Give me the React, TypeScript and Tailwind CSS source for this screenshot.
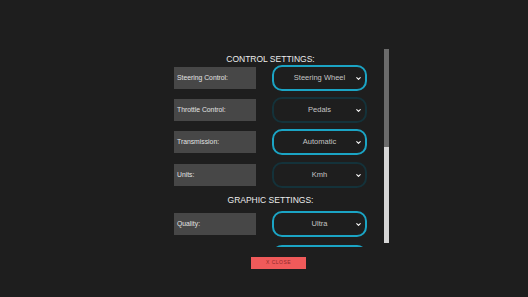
import { ChevronDown } from "lucide-react";

interface Setting {
  label: string;
  value: string;
  active: boolean;
}

const controlSettings: Setting[] = [
  { label: "Steering Control:", value: "Steering Wheel", active: true },
  { label: "Throttle Control:", value: "Pedals", active: false },
  { label: "Transmission:", value: "Automatic", active: true },
  { label: "Units:", value: "Kmh", active: false },
];

const graphicSettings: Setting[] = [
  { label: "Quality:", value: "Ultra", active: true },
  // next row is scrolled below the fold, only its border peeks in
  { label: "", value: "", active: true },
];

function Row({ setting }: { setting: Setting }) {
  return (
    <div className="flex h-[26px] shrink-0 items-center justify-between">
      <div className="flex h-[22px] w-[82px] items-center bg-[#474747] pl-[3px] text-[6.8px] text-[#e2e2e2]">
        {setting.label}
      </div>
      <div
        className={`relative flex h-[26px] w-[95px] items-center justify-center rounded-[10px] border-2 bg-[#1e1e1e] ${
          setting.active ? "border-[#1ba4c4]" : "border-[#14323a]"
        }`}
      >
        <span className="text-[7.5px] text-[#c4c4c4]">{setting.value}</span>
        <ChevronDown
          className="absolute right-[3px] h-[7px] w-[7px] text-white"
          strokeWidth={3.5}
        />
      </div>
    </div>
  );
}

function Heading({ children }: { children: string }) {
  return (
    <div className="flex h-[12px] shrink-0 items-center justify-center text-[8.5px] text-[#ececec]">
      {children}
    </div>
  );
}

export default function App() {
  return (
    <div
      className="flex h-[297px] w-[528px] flex-col bg-[#1e1e1e]"
      style={{ fontFamily: '"Liberation Sans", Arial, sans-serif' }}
    >
      <div className="mt-[49px] flex h-[198px] pl-[174px]">
        <div className="flex w-[193px] flex-col gap-[6px] overflow-hidden pt-[4px]">
          <Heading>CONTROL SETTINGS:</Heading>
          <div className="-mt-[6px] flex flex-col gap-[6px]">
            {controlSettings.map((s, i) => (
              <div key={s.label} className={i === 3 ? "mt-[1px]" : ""}>
                <Row setting={s} />
              </div>
            ))}
          </div>
          <Heading>GRAPHIC SETTINGS:</Heading>
          <div className="-mt-[1px] flex flex-col gap-[8px]">
            {graphicSettings.map((s, i) => (
              <Row key={i} setting={s} />
            ))}
          </div>
        </div>
        <div className="ml-[17px] flex h-[194px] w-[5px] flex-col">
          <div className="h-[98px] bg-[#6b6b6b]" />
          <div className="flex-1 bg-[#d6d6d6]" />
        </div>
      </div>
      <div className="mt-[10px] flex pl-[251px]">
        <div className="flex h-[12px] w-[55px] items-center justify-center bg-[#f05a5a] text-[5px] tracking-[0.5px] text-[#8e2b2b]">
          X CLOSE
        </div>
      </div>
    </div>
  );
}
